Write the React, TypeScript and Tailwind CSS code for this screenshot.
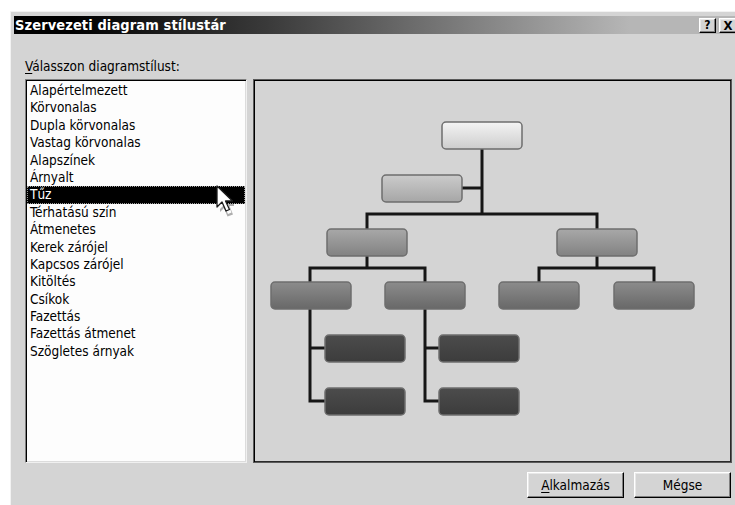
import React from "react";

const items = [
  "Alapértelmezett",
  "Körvonalas",
  "Dupla körvonalas",
  "Vastag körvonalas",
  "Alapszínek",
  "Árnyalt",
  "Tűz",
  "Térhatású szín",
  "Átmenetes",
  "Kerek zárójel",
  "Kapcsos zárójel",
  "Kitöltés",
  "Csíkok",
  "Fazettás",
  "Fazettás átmenet",
  "Szögletes árnyak",
];

type B = { x: number; y: number; g: string };

function Box({ x, y, g }: B) {
  return (
    <rect
      x={x}
      y={y}
      width={80}
      height={27}
      rx={4}
      ry={4}
      fill={`url(#${g})`}
      stroke="#6e6e6e"
      strokeWidth={1.5}
    />
  );
}

function OrgChart() {
  const line = { stroke: "#161616", strokeWidth: 3, fill: "none" } as const;
  return (
    <svg width="475" height="380" viewBox="255 81 475 380" className="block">
      <defs>
        <linearGradient id="g1" x1="0" y1="0" x2="0" y2="1">
          <stop offset="0" stopColor="#f4f4f4" />
          <stop offset="1" stopColor="#cdcdcd" />
        </linearGradient>
        <linearGradient id="g2" x1="0" y1="0" x2="0" y2="1">
          <stop offset="0" stopColor="#cbcbcb" />
          <stop offset="1" stopColor="#a6a6a6" />
        </linearGradient>
        <linearGradient id="g3" x1="0" y1="0" x2="0" y2="1">
          <stop offset="0" stopColor="#a8a8a8" />
          <stop offset="1" stopColor="#828282" />
        </linearGradient>
        <linearGradient id="g4" x1="0" y1="0" x2="0" y2="1">
          <stop offset="0" stopColor="#8c8c8c" />
          <stop offset="1" stopColor="#686868" />
        </linearGradient>
        <linearGradient id="g5" x1="0" y1="0" x2="0" y2="1">
          <stop offset="0" stopColor="#4c4c4c" />
          <stop offset="1" stopColor="#3c3c3c" />
        </linearGradient>
      </defs>
      <path d="M482 149 V214" {...line} />
      <path d="M462 188 H482" {...line} />
      <path d="M367 229 V214 H597 V229" {...line} />
      <path d="M367 256 V268" {...line} />
      <path d="M310 282 V268 H425 V282" {...line} />
      <path d="M597 256 V268" {...line} />
      <path d="M539 282 V268 H654 V282" {...line} />
      <path d="M310 309 V401 H325 M310 348 H325" {...line} />
      <path d="M425 309 V401 H439 M425 348 H439" {...line} />
      <Box x={442} y={122} g="g1" />
      <Box x={382} y={175} g="g2" />
      <Box x={327} y={229} g="g3" />
      <Box x={557} y={229} g="g3" />
      <Box x={271} y={282} g="g4" />
      <Box x={385} y={282} g="g4" />
      <Box x={499} y={282} g="g4" />
      <Box x={614} y={282} g="g4" />
      <Box x={325} y={335} g="g5" />
      <Box x={325} y={388} g="g5" />
      <Box x={439} y={335} g="g5" />
      <Box x={439} y={388} g="g5" />
    </svg>
  );
}

function Cursor() {
  return (
    <svg
      width="22"
      height="32"
      viewBox="0 0 22 32"
      className="absolute left-[189px] top-[105px] pointer-events-none"
    >
      <path d="M5 24 L9 20 L13 29 L16.5 27.5 L13 19 L19 19 L19 21 L14.5 21 L18 29.5 L12.5 31.5 L9 23 L5 27 Z" fill="#7a7a7a" opacity="0.6" />
      <path
        d="M2 1 L2 22 L7 17 L11 26 L14.5 24.5 L10.5 16 L17.5 16 Z"
        fill="#ffffff"
        stroke="#1a1a1a"
        strokeWidth="1.3"
        strokeLinejoin="round"
      />
    </svg>
  );
}

const raised =
  "border border-t-white border-l-white border-r-black border-b-black shadow-[inset_-1px_-1px_#808080,inset_1px_1px_#e8e8e8] bg-[#d4d4d4]";

export default function App() {
  return (
    <div
      className="w-[735px] h-[505px] bg-white overflow-hidden pt-[11px] pl-[10px]"
      style={{ fontFamily: '"DejaVu Sans Condensed", "DejaVu Sans", sans-serif' }}
    >
      <div className="w-[735px] h-[494px] bg-[#d4d4d4] border-t border-l border-[#f2f2f2] pt-[4px] pl-[3px] flex flex-col">
        <div className="h-[18px] w-[724px] flex items-center justify-between bg-[linear-gradient(to_right,#000000_8%,#3a3a3a_35%,#b6b6b6_85%)]">
          <span className="pl-[1px] text-white font-bold text-[14.5px] leading-[18px] tracking-[0.1px]">
            Szervezeti diagram stílustár
          </span>
          <div className="flex gap-[3px] pr-[1px]">
            <div className={`${raised} w-[17px] h-[15px] flex items-center justify-center text-[12px] font-bold leading-none text-black`}>
              ?
            </div>
            <div className={`${raised} w-[18px] h-[15px] flex items-center justify-center text-[13px] font-bold leading-none text-black`}>
              X
            </div>
          </div>
        </div>

        <div className="pl-[11px] w-[718px] flex flex-col">
          <div className="mt-[24px] h-[16px] text-[13.5px] leading-[16px] text-black">
            <span className="underline underline-offset-2">V</span>álasszon diagramstílust:
          </div>
          <div className="mt-[5px] flex gap-[6px]">
            <div className="relative w-[222px] h-[384px] bg-[#fdfdfd] border border-t-[#808080] border-l-[#808080] border-r-[#f0f0f0] border-b-[#f0f0f0] shadow-[inset_1px_1px_#000,inset_-1px_-1px_#dcdcdc] p-[1px]">
              <div className="flex flex-col pt-[1px]">
                {items.map((it) =>
                  it === "Tűz" ? (
                    <div
                      key={it}
                      className="h-[17.4px] leading-[15px] pl-[2px] bg-black text-white text-[13.5px] border border-dotted border-[#9a9a9a]"
                    >
                      {it}
                    </div>
                  ) : (
                    <div
                      key={it}
                      className="h-[17.4px] leading-[17.4px] pl-[3px] text-black text-[13.5px]"
                    >
                      {it}
                    </div>
                  )
                )}
              </div>
              <Cursor />
            </div>
            <div className="w-[479px] h-[384px] bg-[#d4d4d4] border border-[#5a5a5a] shadow-[inset_1px_1px_#000,inset_-1px_-1px_#2a2a2a] p-[1px]">
              <OrgChart />
            </div>
          </div>
          <div className="mt-[9px] flex justify-end gap-[10px] pr-[1px]">
            <div className={`${raised} w-[97px] h-[26px] flex items-center justify-center text-[13.5px] text-black`}>
              <span>
                <span className="underline underline-offset-2">A</span>lkalmazás
              </span>
            </div>
            <div className={`${raised} w-[97px] h-[26px] flex items-center justify-center text-[13.5px] text-black`}>
              Mégse
            </div>
          </div>
        </div>
      </div>
    </div>
  );
}
